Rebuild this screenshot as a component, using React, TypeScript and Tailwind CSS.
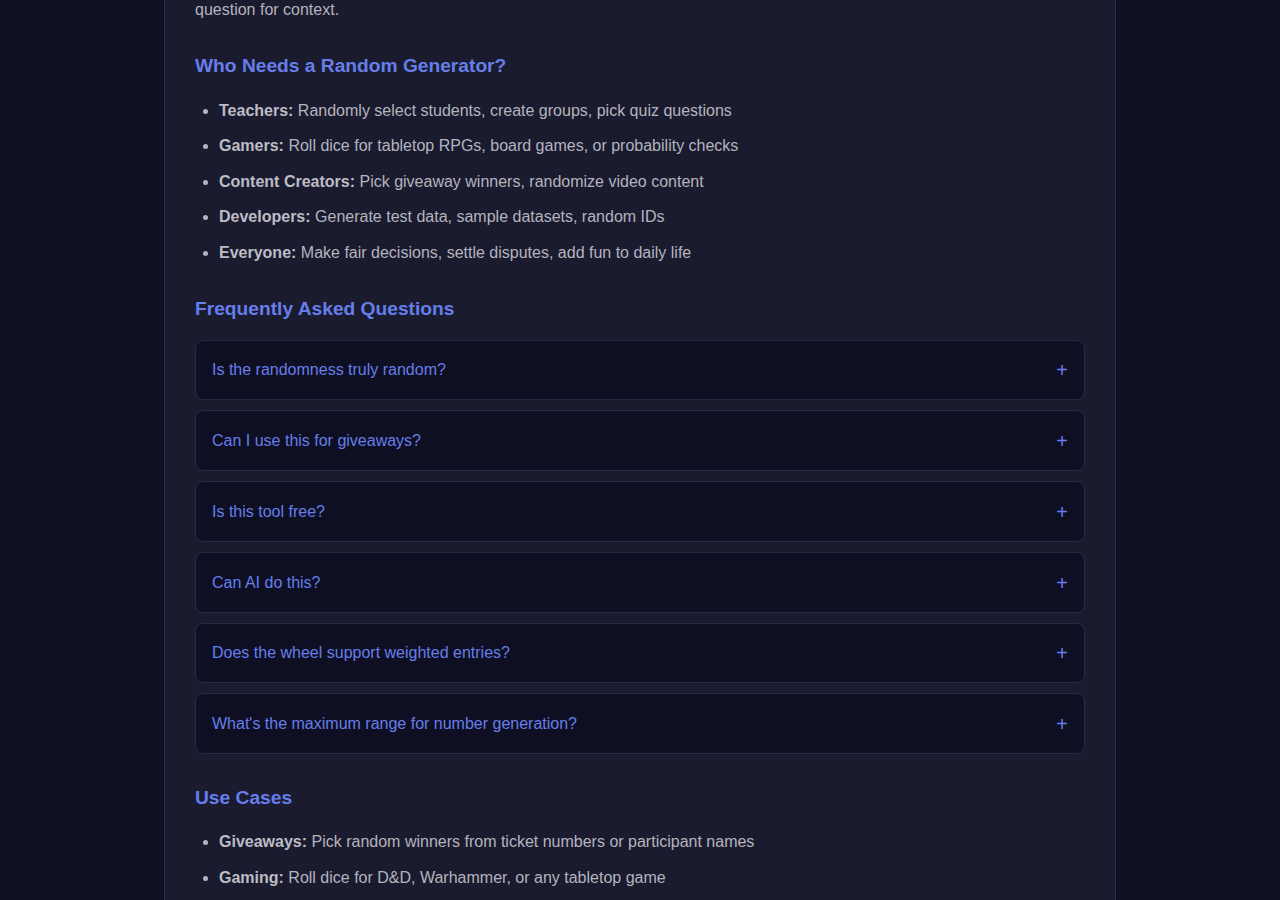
import React from "react";

const who = [
  ["Teachers:", "Randomly select students, create groups, pick quiz questions"],
  ["Gamers:", "Roll dice for tabletop RPGs, board games, or probability checks"],
  ["Content Creators:", "Pick giveaway winners, randomize video content"],
  ["Developers:", "Generate test data, sample datasets, random IDs"],
  ["Everyone:", "Make fair decisions, settle disputes, add fun to daily life"],
];

const faqs = [
  "Is the randomness truly random?",
  "Can I use this for giveaways?",
  "Is this tool free?",
  "Can AI do this?",
  "Does the wheel support weighted entries?",
  "What's the maximum range for number generation?",
];

const uses = [
  ["Giveaways:", "Pick random winners from ticket numbers or participant names"],
  ["Gaming:", "Roll dice for D&D, Warhammer, or any tabletop game"],
];

function List({ items }: { items: string[][] }) {
  return (
    <ul className="list-disc pl-6 flex flex-col gap-[10px] marker:text-[#b4b4be]">
      {items.map(([b, t]) => (
        <li key={b} className="text-[16px] leading-[25.6px] text-[#b4b4be]">
          <strong className="font-bold text-[#bdbdc6]">{b}</strong> {t}
        </li>
      ))}
    </ul>
  );
}

export default function App() {
  return (
    <div
      className="h-[900px] overflow-hidden bg-[#0f0f23] flex justify-center"
      style={{ fontFamily: '"Liberation Sans", Arial, sans-serif' }}
    >
      <div className="w-[952px] shrink-0 bg-[#1b1b2f] border-x border-[#2c2c48] px-[30px]">
        <p className="mt-[-3px] text-[16px] leading-[25.6px] text-[#b4b4be]">
          question for context.
        </p>

        <h2 className="mt-[31px] mb-[21px] text-[19.2px] leading-[23px] font-bold text-[#667eea]">
          Who Needs a Random Generator?
        </h2>
        <List items={who} />

        <h2 className="mt-[31px] mb-[20px] text-[19.2px] leading-[23px] font-bold text-[#667eea]">
          Frequently Asked Questions
        </h2>
        <div className="flex flex-col gap-[10px]">
          {faqs.map((q) => (
            <div
              key={q}
              className="flex items-center justify-between rounded-[8px] border border-[#2a2a48] bg-[#0f0f23] px-[16px] pt-[18.6px] pb-[17.4px]"
            >
              <span className="text-[16px] leading-[22.8px] text-[#667eea]">{q}</span>
              <span className="text-[20px] leading-[22.8px] text-[#667eea] font-light">+</span>
            </div>
          ))}
        </div>

        <h2 className="mt-[32px] mb-[20px] text-[19.2px] leading-[23px] font-bold text-[#667eea]">
          Use Cases
        </h2>
        <List items={uses} />
      </div>
    </div>
  );
}
